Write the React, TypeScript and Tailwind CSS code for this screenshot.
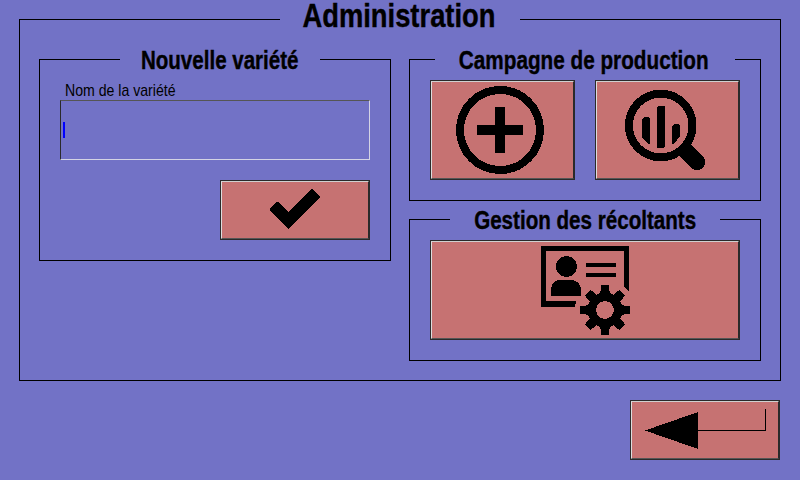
import type { ReactNode } from 'react';

type GroupProps = {
  title: string;
  className: string;
  lead: string;
  gap: string;
  titleClass: string;
  children: ReactNode;
};

/* Framed group whose title interrupts the top border. */
function Group({ title, className, lead, gap, titleClass, children }: GroupProps) {
  return (
    <section className={`flex flex-col ${className}`}>
      <div className="flex h-px items-center">
        <span className={`h-px shrink-0 bg-black ${lead}`} />
        <span className={`flex h-px shrink-0 items-center justify-center ${gap}`}>
          <h2 className={`shrink-0 font-bold whitespace-nowrap [-webkit-text-stroke:0.4px_black] ${titleClass}`}>{title}</h2>
        </span>
        <span className="h-px flex-1 bg-black" />
      </div>
      <div className="flex-1 border-x border-b border-black">{children}</div>
    </section>
  );
}

/* Raised button; the icon is drawn in screen units through its view box. */
function BevelButton({ label, className, viewBox, children }: { label: string; className: string; viewBox: string; children: ReactNode }) {
  return (
    <button type="button" aria-label={label} className={`block shrink-0 border border-[#2a2a2a] bg-[#c67272] ${className}`}>
      <span className="block h-full w-full border border-t-[#d0d0d0] border-r-[#2a2a2a] border-b-[#555555] border-l-[#dddddd]">
        <svg viewBox={viewBox} className="block h-full w-full" shapeRendering="crispEdges">
          {children}
        </svg>
      </span>
    </button>
  );
}

const teeth = [0, 45, 90, 135, 180, 225, 270, 315];

export default function App() {
  return (
    <main className="flex h-[480px] w-[800px] flex-col overflow-hidden bg-[#7272c6] pt-[19px] pl-[19px] font-['Liberation_Sans',Arial,sans-serif] text-black">
      <Group
        title="Administration"
        className="h-[362px] w-[762px]"
        lead="w-[261px]"
        gap="w-[240px]"
        titleClass="text-[34px] leading-[30px] scale-x-[0.805] -mt-[9px] -translate-x-px"
      >
        <div className="flex gap-[18px] pt-[39px] pl-[19px]">
          <Group
            title="Nouvelle variété"
            className="h-[202px] w-[352px]"
            lead="w-[81px]"
            gap="w-[200px]"
            titleClass="text-[26px] leading-[26px] scale-x-[0.79]"
          >
            <div className="flex flex-col pt-[21px] pl-5">
              <label className="h-[19px] origin-left scale-x-[0.83] pl-[6px] text-[17px] leading-[19px] whitespace-nowrap">Nom de la variété</label>
              <div className="flex h-[60px] w-[310px] items-center border border-t-[#555555] border-r-[#d4d4e4] border-b-[#d4d4e4] border-l-[#2a2a2a] pl-0.5">
                <span className="h-4 w-0.5 bg-[#0000ff]" />
              </div>
              <div className="flex w-[310px] justify-end pt-5">
                <BevelButton label="Valider" className="h-[60px] w-[150px]" viewBox="222 182 146 56">
                  <path d="M270 208 L276 202 H279 L288.7 212 L312 188.7 L320 197 L288.7 229 L270 211Z" />
                </BevelButton>
              </div>
            </div>
          </Group>

          <div className="flex flex-col gap-[18px]">
            <Group
              title="Campagne de production"
              className="h-[142px] w-[352px]"
              lead="w-[26px]"
              gap="w-[300px]"
              titleClass="text-[26px] leading-[26px] scale-x-[0.797] -translate-x-px"
            >
              <div className="flex gap-5 pt-5 pl-5">
                <BevelButton label="Nouvelle campagne" className="h-[100px] w-[145px]" viewBox="432 82 141 96">
                  <circle cx="500" cy="130" r="40" fill="none" stroke="black" strokeWidth="8" />
                  <rect x="477" y="125" width="46" height="10" rx="1.5" />
                  <rect x="495" y="107" width="10" height="46" rx="1.5" />
                </BevelButton>
                <BevelButton label="Analyser la campagne" className="h-[100px] w-[145px]" viewBox="597 82 141 96">
                  <circle cx="660.7" cy="125.5" r="31.8" fill="none" stroke="black" strokeWidth="8" />
                  <path d="M642 119 L644 117 H648 L650 119 V144 H648 L642 137Z" />
                  <rect x="657" y="106" width="8" height="42" rx="2" />
                  <path d="M672 126 L674 124 H678 L680 126 V136 L674 144 H672Z" />
                  <path d="M683 148 L697 162" stroke="black" strokeWidth="16.5" />
                  <circle cx="697" cy="162" r="8.2" />
                </BevelButton>
              </div>
            </Group>
            <Group
              title="Gestion des récoltants"
              className="h-[142px] w-[352px]"
              lead="w-[41px]"
              gap="w-[270px]"
              titleClass="text-[26px] leading-[26px] scale-x-[0.792]"
            >
              <div className="pt-5 pl-5">
                <BevelButton label="Gestion des récoltants" className="h-[100px] w-[310px]" viewBox="432 242 306 96">
                  <path d="M541 246 H629 V291 L624 287 V251 H546 V301 H576 L575 307 H541Z" />
                  <circle cx="566.5" cy="266.5" r="10.5" />
                  <path d="M551 296 V289 Q552 280 561 280 H572 Q580 281 581 289 V296Z" />
                  <path d="M586 263 H616 V267 H586Z M586 273 H616 V277 H586Z" />
                  <circle cx="605" cy="310" r="13.2" fill="none" stroke="black" strokeWidth="8.6" />
                  {teeth.map((angle) => (
                    <path key={angle} d="M600 296 L601 285.4 H609 L610 296Z" transform={`rotate(${angle} 605 310)`} />
                  ))}
                </BevelButton>
              </div>
            </Group>
          </div>
        </div>
      </Group>

      <div className="flex justify-end pt-[19px] pr-5">
        <BevelButton label="Retour" className="h-[60px] w-[150px]" viewBox="632 402 146 56">
          <path d="M645 430.5 L698 412 V449Z" />
          <path d="M698 430 H765 V409 H766 V431 H698Z" />
        </BevelButton>
      </div>
    </main>
  );
}
